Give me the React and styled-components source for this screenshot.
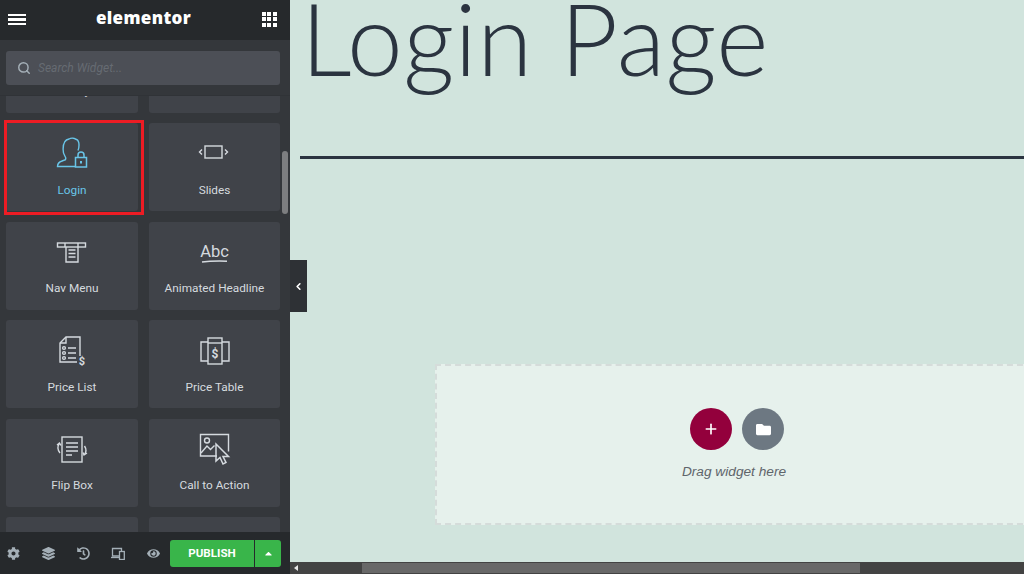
import React from 'react';
import styled, { createGlobalStyle } from 'styled-components';
import { Search, ChevronLeft, Plus } from 'lucide-react';
import { FaCog, FaLayerGroup, FaHistory, FaEye, FaFolder, FaCaretUp } from 'react-icons/fa';

const GlobalStyle = createGlobalStyle`
  html, body, #root {
    margin: 0;
    height: 100%;
  }
  body {
    overflow: hidden;
    font-family: Roboto, "Liberation Sans", sans-serif;
  }
`;

const Page = styled.div`
  display: flex;
  width: 1024px;
  height: 574px;
  position: relative;
  overflow: hidden;
`;

const Sidebar = styled.aside`
  width: 290px;
  flex-shrink: 0;
  display: flex;
  flex-direction: column;
  background: #34373b;
  position: relative;
`;

const TopBar = styled.header`
  height: 40px;
  flex-shrink: 0;
  background: #26292c;
  display: flex;
  align-items: center;
  justify-content: space-between;
  padding: 0 13px 0 8px;
  color: #fff;
`;

const Burger = styled.div`
  width: 18px;
  display: flex;
  flex-direction: column;
  gap: 2px;
  margin-top: -1px;
  & > span {
    height: 2.5px;
    background: #fff;
  }
`;

const Logo = styled.div`
  font-family: "Open Sans", sans-serif;
  font-weight: 800;
  font-size: 17px;
  letter-spacing: 0.35px;
  color: #fff;
  margin-left: -1px;
  margin-top: -6px;
`;

const Apps = styled.div`
  display: grid;
  grid-template-columns: repeat(3, 4px);
  grid-auto-rows: 4px;
  gap: 1.5px;
  margin-top: -2px;
  & > span {
    background: #fff;
  }
`;

const SearchArea = styled.div`
  height: 56px;
  flex-shrink: 0;
  padding: 11px 10px 0 6px;
  box-sizing: border-box;
  background: #34373b;
  border-bottom: 1px solid #303337;
  position: relative;
  z-index: 1;
`;

const SearchBox = styled.div`
  height: 34px;
  border-radius: 3px;
  background: #4c4f56;
  display: flex;
  align-items: center;
  gap: 7px;
  padding-left: 11px;
  color: #a4afb7;
`;

const SearchHint = styled.span`
  font-style: italic;
  font-size: 12px;
  color: #666b72;
`;

const WidgetScroll = styled.div`
  flex: 1;
  overflow: hidden;
`;

const WidgetGrid = styled.div`
  display: grid;
  grid-template-columns: 132px 131px;
  grid-auto-rows: 88px;
  column-gap: 11px;
  row-gap: 10.5px;
  padding-left: 6px;
  margin-top: -71.5px;
`;

const Card = styled.div`
  position: relative;
  background: #404349;
  border-radius: 3px;
  display: flex;
  flex-direction: column;
  align-items: center;
  padding-top: 14px;
  box-sizing: border-box;
  color: ${(p) => (p.$active ? '#69c5e8' : '#d5dadf')};
  ${(p) =>
    p.$active &&
    `
    &::after {
      content: '';
      position: absolute;
      left: -2px;
      top: -3px;
      width: 140px;
      height: 95px;
      box-sizing: border-box;
      border: 3px solid #ed1c24;
    }
  `}
`;

const IconSlot = styled.div`
  width: 32px;
  height: 32px;
  display: flex;
  align-items: center;
  justify-content: center;
  & > svg {
    fill: none;
    stroke: currentColor;
    stroke-width: 1.4;
    overflow: visible;
  }
`;

const CardLabel = styled.div`
  font-size: 11.8px;
  line-height: 14px;
  margin-top: 13.5px;
`;

const IconText = styled.text`
  fill: currentColor;
  stroke: none;
  font-family: Roboto, sans-serif;
  font-weight: ${(p) => p.$weight || 400};
`;

const ScrollThumb = styled.div`
  position: absolute;
  left: 282px;
  top: 151px;
  width: 6px;
  height: 63px;
  border-radius: 3px;
  background: #7d7e80;
  z-index: 1;
`;

const CollapseTab = styled.div`
  position: absolute;
  left: 290px;
  top: 260px;
  width: 17px;
  height: 52px;
  background: #2e3135;
  color: #fff;
  display: flex;
  align-items: center;
  justify-content: center;
  z-index: 2;
`;

const BottomBar = styled.footer`
  height: 42px;
  flex-shrink: 0;
  background: #26292c;
  display: flex;
  align-items: center;
  padding: 0 9px 0 7px;
  position: relative;
  z-index: 1;
`;

const Tools = styled.div`
  display: flex;
  align-items: center;
  justify-content: space-between;
  width: 153px;
  color: #a4afb7;
  font-size: 13px;
  & > svg {
    flex-shrink: 0;
  }
`;

const PublishGroup = styled.div`
  margin-left: auto;
  display: flex;
  height: 27px;
  border-radius: 3px;
  overflow: hidden;
  background: #39b54a;
  color: #fff;
`;

const PublishButton = styled.div`
  width: 84px;
  display: flex;
  align-items: center;
  justify-content: center;
  font-size: 11.6px;
  font-weight: 700;
  border-right: 1px solid #26292c;
`;

const PublishCaret = styled.div`
  width: 26px;
  display: flex;
  align-items: center;
  justify-content: center;
  font-size: 11px;
`;

const Main = styled.main`
  flex: 1;
  min-width: 0;
  display: flex;
  flex-direction: column;
  background: #d1e4dd;
`;

const Canvas = styled.div`
  flex: 1;
  overflow: hidden;
`;

const Title = styled.h1`
  margin: 0 0 0 11px;
  font-family: Lato, "Open Sans", sans-serif;
  font-weight: 300;
  font-size: 100px;
  line-height: 75px;
  letter-spacing: 0.4px;
  color: #2b3440;
  white-space: nowrap;
`;

const Divider = styled.hr`
  margin: 81px 0 0 10px;
  height: 3px;
  border: 0;
  background: #2b3440;
`;

const DropZone = styled.section`
  margin: 205px 0 0 145px;
  width: 598px;
  height: 161px;
  box-sizing: border-box;
  background: #e6f1ec;
  border: 2px dashed #d5dcda;
  display: flex;
  flex-direction: column;
  align-items: center;
  padding-top: 42px;
`;

const RoundButtons = styled.div`
  display: flex;
  gap: 10px;
  margin-left: 6px;
`;

const RoundButton = styled.div`
  width: 42px;
  height: 42px;
  border-radius: 50%;
  background: ${(p) => p.$color};
  color: #fff;
  display: flex;
  align-items: center;
  justify-content: center;
`;

const DropHint = styled.div`
  margin-top: 14px;
  font-family: "Liberation Sans", Arial, sans-serif;
  font-style: italic;
  font-size: 13.7px;
  line-height: 16px;
  color: #5f656b;
`;

const HScroll = styled.div`
  height: 12px;
  flex-shrink: 0;
  background: #434343;
  display: flex;
  align-items: stretch;
`;

const HArrow = styled.div`
  width: 12px;
  display: flex;
  align-items: center;
  justify-content: center;
  &::before {
    content: '';
    border: 3px solid transparent;
    border-left: 0;
    border-right: 4px solid #e8e8e8;
  }
`;

const HThumb = styled.div`
  width: 498px;
  margin: 1px 0 1px 60px;
  background: #686868;
`;

const LoginIcon = () => (
  <svg width="32" height="32" viewBox="0 0 32 32">
    <path d="M19 29.500H1.500c0-3 1.500-4.500 4.500-5.500l3.500-1.300c.6-1.300.2-2.600-.8-4-1.200-1.800-1.600-4-1.600-6.500C7.100 6 9.500 2.500 13 2c1-.6 3-1 4.500-.7 1.500.2 1.800 1 3 1.200 1.500.6 2.500 2.500 2.500 5.500 0 2-.3 4-1 5.500" />
    <path d="M19.500 20.500h11v9.500h-11z" strokeWidth="1.500" />
    <path d="M22 20.500v-2.500a3 3 0 0 1 6 0v2.500" strokeWidth="1.500" />
    <path d="M25 24v2.500" strokeWidth="2" />
  </svg>
);

const SlidesIcon = () => (
  <svg width="32" height="32" viewBox="0 0 32 32">
    <rect x="6" y="9" width="17" height="12" />
    <path d="M3 12.500 0.500 15 3 17.500M26 12.500l2.500 2.500-2.500 2.500" />
  </svg>
);

const NavMenuIcon = () => (
  <svg width="32" height="32" viewBox="0 0 32 32">
    <rect x="1.500" y="7" width="28" height="4" />
    <path d="M9 7v4M22 7v4M10 11v15h12V11M12.500 14h7M12.500 17.500h7M12.500 21h7" />
  </svg>
);

const AbcIcon = () => (
  <svg width="32" height="32" viewBox="0 0 32 32">
    <IconText x="15.500" y="21" textAnchor="middle" fontSize="16.500">Abc</IconText>
    <path d="M3 26c8-1 18-1 25-.8" strokeWidth="1.500" />
  </svg>
);

const PriceListIcon = () => (
  <svg width="32" height="32" viewBox="0 0 32 32">
    <path d="M24 22V3H10L4 9v19h17" />
    <path d="M10 3v6H4" />
    <circle cx="8" cy="14" r="1.400" />
    <circle cx="8" cy="19" r="1.400" />
    <circle cx="8" cy="24" r="1.400" />
    <path d="M12 14h8M12 19h8M12 24h8" />
    <IconText x="26" y="30.500" textAnchor="middle" fontSize="11" $weight={700}>$</IconText>
  </svg>
);

const PriceTableIcon = () => (
  <svg width="32" height="32" viewBox="0 0 32 32">
    <path d="M9 8H2v19h7M23 8h7v19h-7" />
    <rect x="9" y="4" width="14" height="26" />
    <path d="M9 9h14" />
    <IconText x="16" y="24" textAnchor="middle" fontSize="12" $weight={700}>$</IconText>
  </svg>
);

const FlipBoxIcon = () => (
  <svg width="32" height="32" viewBox="0 0 32 32">
    <rect x="6" y="4" width="20" height="25" />
    <path d="M10 10h12M10 14h12M10 18h12M10 22h6" />
    <path d="M3.500 10c-2 3-2 7 .5 10M1 12l2.500-2 1.500 2.500M28.500 13c2 3 2 6-.5 9M31 20l-3 2-1-2.500" />
  </svg>
);

const CtaIcon = () => (
  <svg width="32" height="32" viewBox="0 0 32 32">
    <path d="M18 23H1.500V1.500h28v17" />
    <circle cx="8" cy="7.500" r="2.500" />
    <path d="M2 20l6-7 3.500 3.500 4-4" />
    <path d="M17 11v17l4-3.500 3 6.500 3-1.500-3-6h5.500z" strokeWidth="1.500" />
  </svg>
);

const DevicesIcon = () => (
  <svg width="14" height="13" viewBox="0 0 14 13" fill="none" stroke="currentColor" strokeWidth="1.300">
    <path d="M8 9H1.500V1.500h9V4" />
    <path d="M0 10.500h8" />
    <rect x="8.500" y="4.500" width="4.800" height="8" />
  </svg>
);

// last row is only half visible above the footer
const widgets = [
  { label: 'Gallery' },
  { label: 'Portfolio' },
  { label: 'Login', icon: <LoginIcon />, active: true },
  { label: 'Slides', icon: <SlidesIcon /> },
  { label: 'Nav Menu', icon: <NavMenuIcon /> },
  { label: 'Animated Headline', icon: <AbcIcon /> },
  { label: 'Price List', icon: <PriceListIcon /> },
  { label: 'Price Table', icon: <PriceTableIcon /> },
  { label: 'Flip Box', icon: <FlipBoxIcon /> },
  { label: 'Call to Action', icon: <CtaIcon /> },
  { label: '' },
  { label: '' },
];

const App = () => (
  <Page>
    <GlobalStyle />
    <Sidebar>
      <TopBar>
        <Burger>
          <span />
          <span />
          <span />
        </Burger>
        <Logo>elementor</Logo>
        <Apps>
          {Array.from({ length: 9 }, (_, i) => (
            <span key={i} />
          ))}
        </Apps>
      </TopBar>
      <SearchArea>
        <SearchBox>
          <Search size={14} strokeWidth={2.5} />
          <SearchHint>Search Widget...</SearchHint>
        </SearchBox>
      </SearchArea>
      <WidgetScroll>
        <WidgetGrid>
          {widgets.map((w, i) => (
            <Card key={i} $active={w.active}>
              <IconSlot>{w.icon}</IconSlot>
              <CardLabel>{w.label}</CardLabel>
            </Card>
          ))}
        </WidgetGrid>
      </WidgetScroll>
      <ScrollThumb />
      <BottomBar>
        <Tools>
          <FaCog />
          <FaLayerGroup />
          <FaHistory />
          <DevicesIcon />
          <FaEye />
        </Tools>
        <PublishGroup>
          <PublishButton>PUBLISH</PublishButton>
          <PublishCaret>
            <FaCaretUp />
          </PublishCaret>
        </PublishGroup>
      </BottomBar>
    </Sidebar>
    <CollapseTab>
      <ChevronLeft size={11} strokeWidth={3.5} />
    </CollapseTab>
    <Main>
      <Canvas>
        <Title>Login Page</Title>
        <Divider />
        <DropZone>
          <RoundButtons>
            <RoundButton $color="#93003c">
              <Plus size={16} strokeWidth={2.5} />
            </RoundButton>
            <RoundButton $color="#6d7882">
              <FaFolder size={15} />
            </RoundButton>
          </RoundButtons>
          <DropHint>Drag widget here</DropHint>
        </DropZone>
      </Canvas>
      <HScroll>
        <HArrow />
        <HThumb />
      </HScroll>
    </Main>
  </Page>
);

export default App;
